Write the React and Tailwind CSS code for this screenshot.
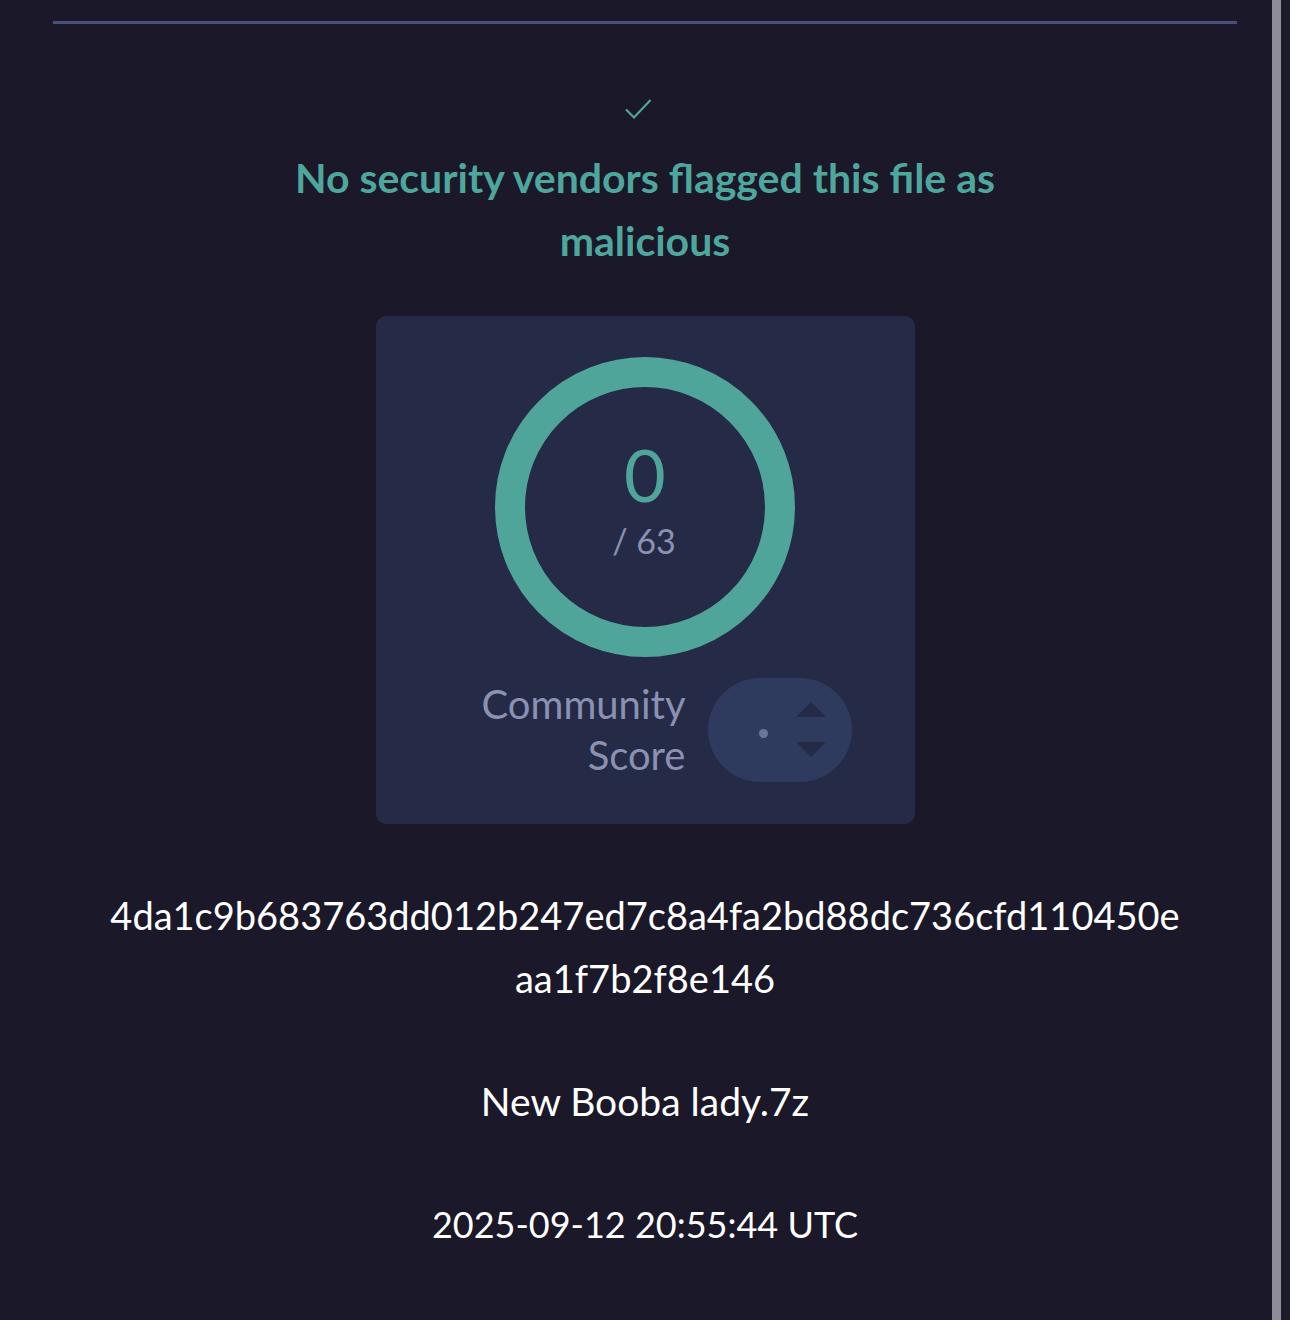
import React from "react";

export default function App() {
  return (
    <div className="relative w-[1290px] h-[1320px] bg-[#1a1829] overflow-hidden" style={{ fontFamily: "Lato, 'Noto Sans', sans-serif" }}>
      {/* scrollbar */}
      <div className="absolute top-0 right-0 h-full w-[18px] flex">
        <div className="w-[9px] h-full bg-[#8e8c99]"></div>
        <div className="w-[9px] h-full bg-[#1c1b2a]"></div>
      </div>

      <div className="w-[1290px] flex flex-col items-center">
        <div className="mt-[21px] w-[1184px] h-[3px] bg-[#474f7b]"></div>

        <svg className="mt-[74px] ml-[-12px]" width="30" height="22" viewBox="0 0 30 22">
          <polyline points="2,11.5 10,19.5 26.5,2" fill="none" stroke="#4fa59b" strokeWidth="2.2" />
        </svg>

        <h1 className="mt-[26px] w-[800px] text-center font-bold text-[41px] leading-[63px] text-[#4ea79d]">
          No security vendors flagged this file as malicious
        </h1>

        <div className="mt-[44px] w-[539px] h-[508px] rounded-[10px] bg-[#252b46] flex flex-col items-center">
          <div className="relative mt-[41px] w-[300px] h-[300px]">
            <svg width="300" height="300" viewBox="0 0 300 300" className="absolute inset-0">
              <circle cx="150" cy="150" r="135" fill="none" stroke="#50a59a" strokeWidth="30" />
            </svg>
            <div className="absolute inset-0 flex flex-col items-center">
              <div className="mt-[74px] text-[72px] leading-[86px] text-[#50a59a]">0</div>
              <div className="mt-[2px] text-[34px] leading-[44px] text-[#8a91b3] pr-[2px]">/ 63</div>
            </div>
          </div>

          <div className="mt-[21px] flex items-center gap-[22px]">
            <div className="w-[247px] text-right text-[40px] leading-[51px] text-[#8a91b3]">
              Community
              <br />
              Score
            </div>
            <div className="relative w-[144px] h-[104px] rounded-full bg-[#2e3a5e]">
              <div className="absolute left-[51px] top-[51px] w-[9px] h-[9px] rounded-full bg-[#6d7599]"></div>
              <svg className="absolute left-[88px] top-[24px]" width="30" height="16" viewBox="0 0 30 16">
                <polygon points="15,0 30,15 0,15" fill="#252b46" />
              </svg>
              <svg className="absolute left-[88px] top-[64px]" width="30" height="16" viewBox="0 0 30 16">
                <polygon points="0,0 30,0 15,15" fill="#252b46" />
              </svg>
            </div>
          </div>
        </div>

        <div className="mt-[60px] text-center text-white text-[38px] leading-[63px]">
          <div>4da1c9b683763dd012b247ed7c8a4fa2bd88dc736cfd110450e</div>
          <div>aa1f7b2f8e146</div>
        </div>

        <div className="mt-[60px] text-center text-white text-[39px] leading-[63px]">New Booba lady.7z</div>

        <div className="mt-[60px] text-center text-white text-[36px] leading-[63px]">2025-09-12 20:55:44 UTC</div>
      </div>
    </div>
  );
}
